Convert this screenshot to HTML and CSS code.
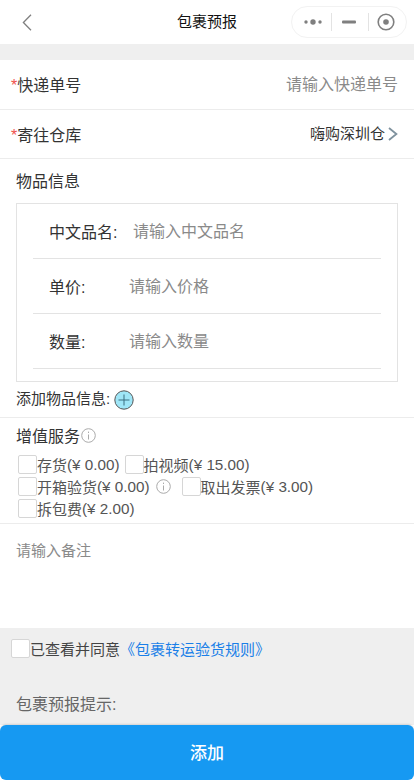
FILE: index.html
```html
<!DOCTYPE html>
<html lang="zh-CN">
<head>
<meta charset="utf-8">
<title>包裹预报</title>
<link rel="stylesheet" href="styles.css">
</head>
<body>
<div class="page">
  <header class="navbar">
    <div class="nav-left">
      <svg class="back" width="10" height="17" viewBox="0 0 10 17"><path d="M9 .8 1.4 8.5 9 16.2" fill="none" stroke="#7f7f7f" stroke-width="1.3"/></svg>
    </div>
    <div class="nav-title">包裹预报</div>
    <div class="nav-right">
      <div class="capsule">
        <svg class="cap-cell cap-more" width="20" height="8" viewBox="0 0 20 8"><circle cx="3" cy="4" r="1.7" fill="#7f7f7f"/><circle cx="10" cy="4" r="2.7" fill="#7f7f7f"/><circle cx="17" cy="4" r="1.7" fill="#7f7f7f"/></svg>
        <span class="cap-div"></span>
        <svg class="cap-cell cap-min" width="14" height="4" viewBox="0 0 14 4"><rect y=".5" width="14" height="3" rx="1" fill="#7f7f7f"/></svg>
        <span class="cap-div"></span>
        <svg class="cap-cell cap-rec" width="18" height="18" viewBox="0 0 18 18"><circle cx="9" cy="9" r="7.8" fill="none" stroke="#7f7f7f" stroke-width="1.6"/><circle cx="9" cy="9" r="2.8" fill="#7f7f7f"/></svg>
      </div>
    </div>
  </header>

  <main class="form">
    <div class="row row-first">
      <div class="label"><span class="star">*</span>快递单号</div>
      <div class="placeholder">请输入快递单号</div>
    </div>
    <div class="row row-second">
      <div class="label"><span class="star">*</span>寄往仓库</div>
      <div class="picker">
        <span>嗨购深圳仓</span>
        <svg class="picker-arrow" width="10" height="14" viewBox="0 0 10 14"><path d="M1 1l7.4 6L1 13" fill="none" stroke="#7f929e" stroke-width="1.8"/></svg>
      </div>
    </div>

    <section class="goods">
      <h2 class="goods-title">物品信息</h2>
      <div class="goods-box">
        <div class="goods-row goods-row-name">
          <span class="goods-label">中文品名:</span>
          <span class="goods-input">请输入中文品名</span>
        </div>
        <div class="goods-row">
          <span class="goods-label">单价:</span>
          <span class="goods-input">请输入价格</span>
        </div>
        <div class="goods-row">
          <span class="goods-label">数量:</span>
          <span class="goods-input">请输入数量</span>
        </div>
      </div>
      <div class="add-line">
        <span class="add-text">添加物品信息:</span>
        <svg width="20" height="20" viewBox="0 0 20 20"><circle cx="10" cy="10" r="9.2" fill="#9fe6f7" stroke="#555" stroke-width="1"/><path d="M10 4.5v11M4.5 10h11" stroke="#3b6f80" stroke-width="1"/></svg>
      </div>
    </section>

    <section class="services">
      <div class="services-title">
        <span>增值服务</span>
        <svg class="info" width="15" height="15" viewBox="0 0 15 15"><circle cx="7.5" cy="7.5" r="6.8" fill="none" stroke="#aaa"/><path d="M7.5 6.5v5M7.5 3.6v1.4" stroke="#aaa" stroke-width="1"/></svg>
      </div>
      <div class="svc-line">
        <span class="check"></span><span class="svc-text">存货<span class="price">(¥ 0.00)</span></span>
        <span class="check check-second"></span><span class="svc-text">拍视频<span class="price">(¥ 15.00)</span></span>
      </div>
      <div class="svc-line">
        <span class="check"></span><span class="svc-text">开箱验货<span class="price">(¥ 0.00)</span></span>
        <svg class="info info-mid" width="15" height="15" viewBox="0 0 15 15"><circle cx="7.5" cy="7.5" r="6.8" fill="none" stroke="#aaa"/><path d="M7.5 6.5v5M7.5 3.6v1.4" stroke="#aaa" stroke-width="1"/></svg>
        <span class="check check-third"></span><span class="svc-text">取出发票<span class="price">(¥ 3.00)</span></span>
      </div>
      <div class="svc-line">
        <span class="check"></span><span class="svc-text">拆包费<span class="price">(¥ 2.00)</span></span>
      </div>
    </section>

    <section class="remark">请输入备注</section>

    <section class="footer-area">
      <div class="agree">
        <span class="check check-agree"></span><span>已查看并同意</span><span class="link">《包裹转运验货规则》</span>
      </div>
      <div class="tip">包裹预报提示:</div>
    </section>
  </main>

  <button class="submit" type="button"><span class="submit-text">添加</span></button>
</div>
</body>
</html>
```

FILE: styles.css
```css
* { box-sizing: border-box; }
html, body { margin: 0; padding: 0; }
body {
  width: 414px;
  height: 780px;
  overflow: hidden;
  background: #fff;
  font-family: "Liberation Sans", "Noto Sans CJK SC", sans-serif;
  color: #333;
}
.page { height: 780px; display: flex; flex-direction: column; }

.navbar {
  height: 44px;
  flex: none;
  display: grid;
  grid-template-columns: 1fr auto 1fr;
  align-items: center;
  background: #fff;
}
.nav-left { display: flex; align-items: center; padding-left: 22px; }
.back { display: block; }
.nav-title { font-size: 15px; color: #111; line-height: 44px; }
.nav-right { display: flex; justify-content: flex-end; padding-right: 7px; }
.capsule {
  width: 116px;
  height: 32px;
  border: 1px solid #f2f2f2;
  border-radius: 16px;
  background: #fff;
  display: flex;
  align-items: center;
}
.cap-more { margin-left: 11px; }
.cap-div { width: 1px; height: 18px; background: #e3e3e3; }
.capsule .cap-div:nth-of-type(1) { margin-left: 8px; }
.cap-min { margin: 0 12px 0 10px; }
.cap-rec { margin-left: 8px; }

.form { flex: 1; display: flex; flex-direction: column; background: #fff; border-top: 16px solid #efefef; }
.row {
  height: 49px;
  flex: none;
  display: flex;
  align-items: center;
  justify-content: space-between;
  padding: 0 16px 0 11px;
  border-bottom: 1px solid #ececec;
}
.row-first { height: 50px; }
.label { font-size: 16px; color: #333; line-height: 22px; padding-top: 2px; }
.row-second .label { padding-top: 4px; }
.star { color: #f0514c; }
.placeholder { font-size: 16px; color: #8a8a8a; margin-top: -4px; }
.picker { display: flex; align-items: center; gap: 3px; font-size: 15px; color: #333; margin-top: -4px; }
.picker-arrow { margin-top: 3px; }

.goods { flex: none; padding: 0 16px; }
.goods-title { margin: 0; font-size: 16px; font-weight: 400; color: #333; height: 44px; line-height: 46px; }
.goods-box { height: 179px; border: 1px solid #e3e3e3; padding: 0 16px; }
.goods-row {
  height: 55px;
  display: flex;
  align-items: center;
  border-bottom: 1px solid #e3e3e3;
  font-size: 16px;
  padding-left: 16px;
}
.goods-label { width: 80px; flex: none; color: #333; }
.goods-input { color: #8a8a8a; margin-top: -2px; }
.goods-row-name { padding-left: 15px; }
.goods-row-name .goods-label { width: 84px; margin-left: 1px; }
.add-line { display: flex; align-items: center; gap: 4px; height: 35px; font-size: 15px; color: #333; }
.add-text { margin-top: -5px; }

.services { flex: none; border-top: 1px solid #ececec; padding: 7px 18px 0; height: 107px; border-bottom: 1px solid #ececec; }
.services-title { display: flex; align-items: center; gap: 1px; font-size: 16px; color: #333; height: 20px; margin-left: -2px; margin-bottom: 8px; }
.info { flex: none; display: block; }
.svc-line { display: flex; align-items: center; height: 22px; font-size: 15px; color: #555; }
.check {
  width: 19px;
  height: 19px;
  flex: none;
  display: inline-block;
  border: 1px solid #d6d6d6;
  border-radius: 2px;
  background: #fff;
}
.svc-text { white-space: nowrap; }
.price { font-size: 15.25px; vertical-align: 1px; }
.check-second { margin-left: 5px; }
.info-mid { margin-left: 6px; }
.check-third { margin-left: 11px; }

.remark { flex: none; height: 104px; padding: 17px 16px 0; font-size: 15px; line-height: 20px; color: #8a8a8a; }

.footer-area { flex: 1; background: #efefef; padding: 11px 0 0 11px; }
.agree { display: flex; align-items: center; height: 19px; font-size: 15px; color: #444; }
.check-agree { margin: 0; }
.link { color: #1a7fe8; }
.tip { margin: 37px 0 0 5px; font-size: 16px; line-height: 20px; color: #666; }

.submit {
  flex: none;
  height: 55px;
  width: 414px;
  border: 0;
  border-radius: 6px;
  background: #1699f2;
  box-shadow: 0 -1px 2px rgba(0, 0, 0, .12);
  color: #fff;
  font-family: inherit;
  font-size: 17px;
  font-weight: 500;
  padding: 0 0 3px;
}
```
